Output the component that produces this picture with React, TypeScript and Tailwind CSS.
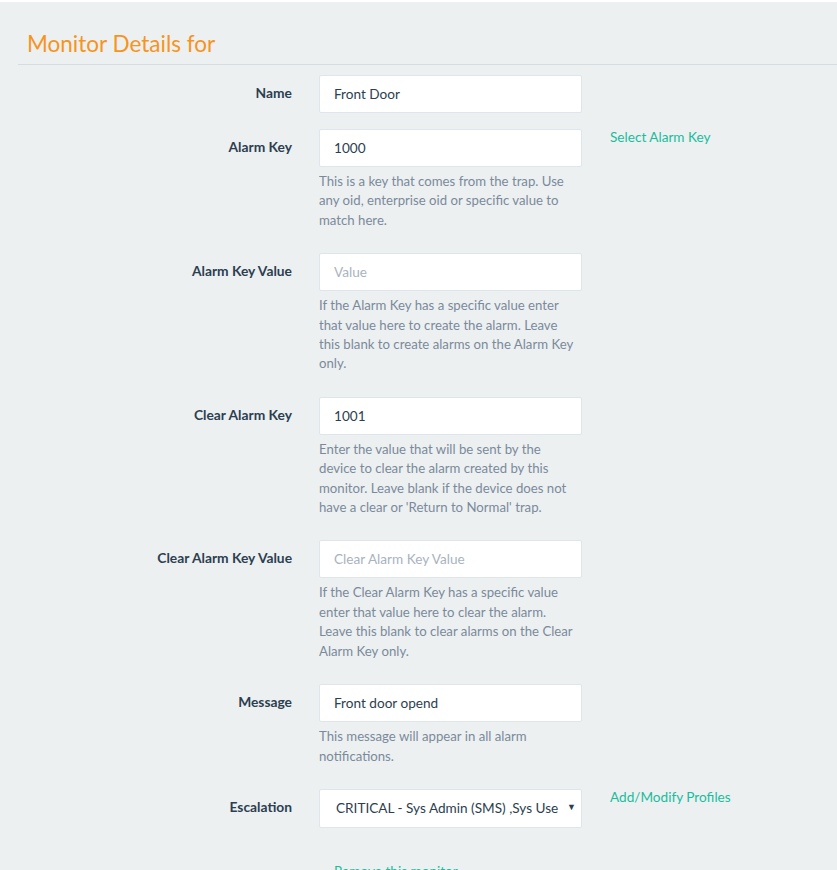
import { ReactNode } from 'react';

interface RowProps {
  label: string;
  children: ReactNode;
  help?: string[];
  link?: string;
}

function FormRow({ label, children, help, link }: RowProps) {
  return (
    <div className="flex items-start mb-[16px]">
      <label className="w-[292px] shrink-0 text-right pt-[8px] text-[13.8px] font-bold text-[#2c3e50] leading-[19px]">
        {label}
      </label>
      <div className="ml-[27px] w-[263px] shrink-0">
        {children}
        {help && (
          <p className="mt-[5px] mb-[7px] text-[13.2px] leading-[19.4px] text-[#7b8a9b]">
            {help.map((line, i) => (
              <span key={i} className="block whitespace-nowrap">
                {line}
              </span>
            ))}
          </p>
        )}
      </div>
      {link && (
        <a className="ml-[28px] mt-[-1px] text-[13.6px] leading-[19px] text-[#1abc9c] cursor-pointer">
          {link}
        </a>
      )}
    </div>
  );
}

function TextInput({ value, placeholder }: { value?: string; placeholder?: string }) {
  return (
    <input
      readOnly
      value={value ?? ''}
      placeholder={placeholder}
      className="w-full h-[38px] px-[14px] bg-white border border-[#dfe5ec] rounded-[2px] text-[13.6px] text-[#2c3e50] placeholder:text-[#a9b3be] outline-none"
    />
  );
}

export default function App() {
  return (
    <div className="min-h-screen bg-white pt-[2px]" style={{ fontFamily: 'Lato, "Open Sans", sans-serif' }}>
      <div className="bg-[#ecf0f1] h-[868px] overflow-hidden">
        {/* 标题 */}
        <div className="ml-[18px] border-b border-[#d6dde0] pt-[29px] pb-[7px] pl-[9px]">
          <h1 className="text-[22.5px] leading-[26px] text-[#f7941d] font-normal">Monitor Details for</h1>
        </div>

        <div className="pt-[10px]">
          <FormRow label="Name">
            <TextInput value="Front Door" />
          </FormRow>

          <FormRow
            label="Alarm Key"
            link="Select Alarm Key"
            help={[
              'This is a key that comes from the trap. Use',
              'any oid, enterprise oid or specific value to',
              'match here.',
            ]}
          >
            <TextInput value="1000" />
          </FormRow>

          <FormRow
            label="Alarm Key Value"
            help={[
              'If the Alarm Key has a specific value enter',
              'that value here to create the alarm. Leave',
              'this blank to create alarms on the Alarm Key',
              'only.',
            ]}
          >
            <TextInput placeholder="Value" />
          </FormRow>

          <FormRow
            label="Clear Alarm Key"
            help={[
              'Enter the value that will be sent by the',
              'device to clear the alarm created by this',
              'monitor. Leave blank if the device does not',
              "have a clear or 'Return to Normal' trap.",
            ]}
          >
            <TextInput value="1001" />
          </FormRow>

          <FormRow
            label="Clear Alarm Key Value"
            help={[
              'If the Clear Alarm Key has a specific value',
              'enter that value here to clear the alarm.',
              'Leave this blank to clear alarms on the Clear',
              'Alarm Key only.',
            ]}
          >
            <TextInput placeholder="Clear Alarm Key Value" />
          </FormRow>

          <FormRow
            label="Message"
            help={['This message will appear in all alarm', 'notifications.']}
          >
            <TextInput value="Front door opend" />
          </FormRow>

          <FormRow label="Escalation" link="Add/Modify Profiles">
            <div className="relative w-full h-[39px] bg-white border border-[#dfe5ec] rounded-[2px] flex items-center">
              <span className="block w-[222px] ml-[16px] overflow-hidden whitespace-nowrap text-[13.6px] text-[#2c3e50]">
                CRITICAL - Sys Admin (SMS) ,Sys User (Email)
              </span>
              <span className="absolute right-[5px] top-[10px] text-[9px] text-[#2c3e50]">▼</span>
            </div>
          </FormRow>

          <div className="ml-[334px] pt-[18px] text-[13.6px] leading-[19px] text-[#1abc9c]">Remove this monitor</div>
        </div>
      </div>
    </div>
  );
}
